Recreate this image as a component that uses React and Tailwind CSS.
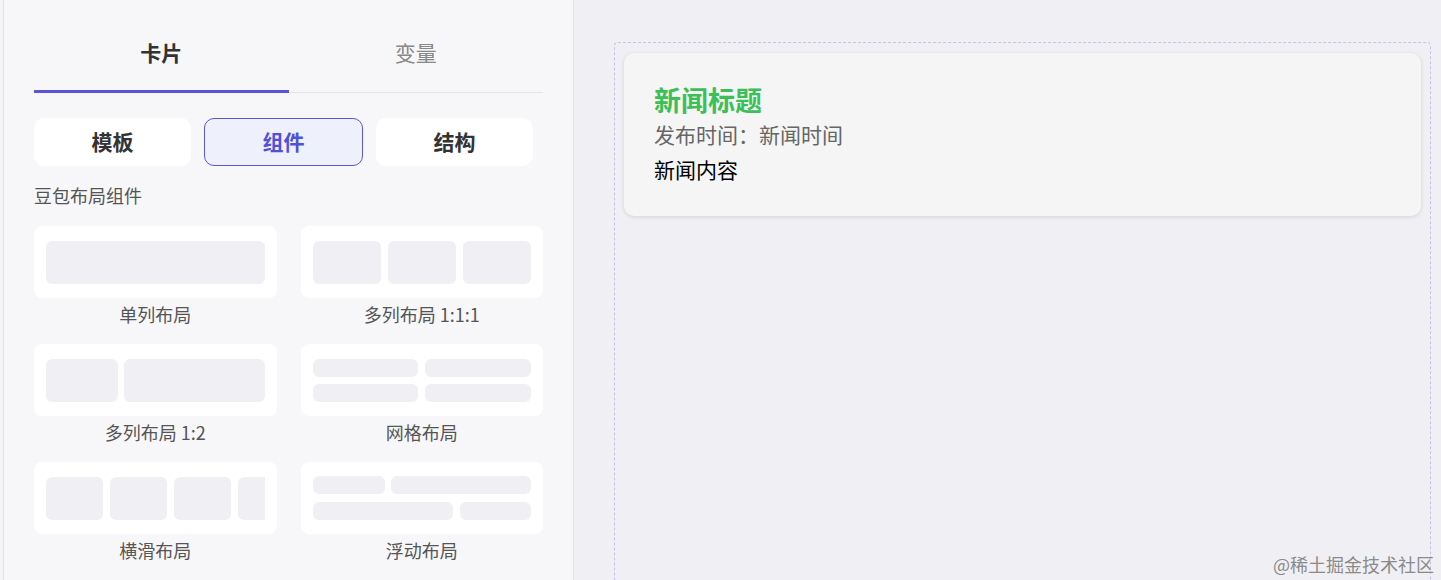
import React from "react";

const font = { fontFamily: '"Noto Sans CJK SC", "Noto Sans", sans-serif' };

function Block({ className = "" }) {
  return <div className={`bg-[#f0f0f4] rounded-md ${className}`} />;
}

function LayoutCard({ label, children }) {
  return (
    <div className="flex flex-col items-center">
      <div className="w-full h-[72px] bg-white rounded-lg px-3 py-[14px] flex flex-col justify-center overflow-hidden">
        {children}
      </div>
      <div className="mt-[5px] mb-[19px] text-[18px] leading-[22px] text-[#555]">{label}</div>
    </div>
  );
}

export default function App() {
  return (
    <div style={font} className="relative w-[1441px] h-[580px] overflow-hidden bg-[#f0f0f4] flex">
      <div className="w-[3px] bg-[#f4f4f6] shrink-0" />
      <aside className="w-[571px] shrink-0 h-full bg-[#f7f7fa] border-l border-r border-[#e2e2e6] px-[30px] pt-[35px]">
        {/* tabs */}
        <div className="flex border-b border-[#e3e3ea]">
          <div className="flex-1 -mb-px border-b-[3px] border-[#5a55d6] pb-[21px] text-center text-[21px] leading-[34px] font-bold text-[#333]">
            卡片
          </div>
          <div className="flex-1 pb-[21px] text-center text-[21px] leading-[34px] text-[#888]">变量</div>
        </div>
        {/* segment buttons */}
        <div className="flex gap-[13px] mt-[25px]">
          <div className="w-[157px] h-[48px] bg-white rounded-[10px] flex items-center justify-center text-[21px] font-bold text-[#333]">
            模板
          </div>
          <div className="w-[159px] h-[48px] bg-[#eef0fc] border border-[#5b57d0] rounded-[10px] flex items-center justify-center text-[21px] font-bold text-[#5050d8]">
            组件
          </div>
          <div className="w-[157px] h-[48px] bg-white rounded-[10px] flex items-center justify-center text-[21px] font-bold text-[#333]">
            结构
          </div>
        </div>
        <div className="mt-[18px] text-[18px] leading-[22px] text-[#555]">豆包布局组件</div>
        <div className="mt-[20px] grid grid-cols-2 gap-x-[24px]">
          <LayoutCard label="单列布局">
            <Block className="h-[43px] w-full" />
          </LayoutCard>
          <LayoutCard label="多列布局 1:1:1">
            <div className="flex gap-[7px] h-[43px]">
              <Block className="flex-1" />
              <Block className="flex-1" />
              <Block className="flex-1" />
            </div>
          </LayoutCard>
          <LayoutCard label="多列布局 1:2">
            <div className="flex gap-[6px] h-[43px]">
              <Block className="w-[72px]" />
              <Block className="flex-1" />
            </div>
          </LayoutCard>
          <LayoutCard label="网格布局">
            <div className="grid grid-cols-2 gap-x-[7px] gap-y-[7px]">
              <Block className="h-[18px]" />
              <Block className="h-[18px]" />
              <Block className="h-[18px]" />
              <Block className="h-[18px]" />
            </div>
          </LayoutCard>
          <LayoutCard label="横滑布局">
            <div className="flex gap-[7px] h-[43px] overflow-hidden">
              <Block className="w-[57px] shrink-0" />
              <Block className="w-[57px] shrink-0" />
              <Block className="w-[57px] shrink-0" />
              <Block className="w-[57px] shrink-0" />
            </div>
          </LayoutCard>
          <LayoutCard label="浮动布局">
            <div className="flex flex-col gap-[8px]">
              <div className="flex gap-[6px]">
                <Block className="w-[72px] h-[18px]" />
                <Block className="flex-1 h-[18px]" />
              </div>
              <div className="flex gap-[7px]">
                <Block className="w-[140px] h-[18px]" />
                <Block className="flex-1 h-[18px]" />
              </div>
            </div>
          </LayoutCard>
        </div>
      </aside>
      <main className="flex-1 pl-[40px] pt-[42px] pr-[10px]">
        <div className="h-[600px] border border-dashed border-[#c6c1f0] rounded-[4px] px-[9px] pt-[10px]">
          <div className="bg-[#f5f5f5] rounded-[10px] shadow-[0_1px_4px_rgba(0,0,0,0.12)] h-[163px] pl-[30px] pt-[29px]">
            <div className="text-[27px] leading-[35px] font-bold text-[#3bbf58]">新闻标题</div>
            <div className="text-[21px] leading-[35px] text-[#666]">发布时间：新闻时间</div>
            <div className="text-[21px] leading-[34px] text-black">新闻内容</div>
          </div>
        </div>
      </main>
      <div className="absolute right-[7px] bottom-[4px] text-[18px] leading-[24px] text-[#8a8a8a]">@稀土掘金技术社区</div>
    </div>
  );
}
